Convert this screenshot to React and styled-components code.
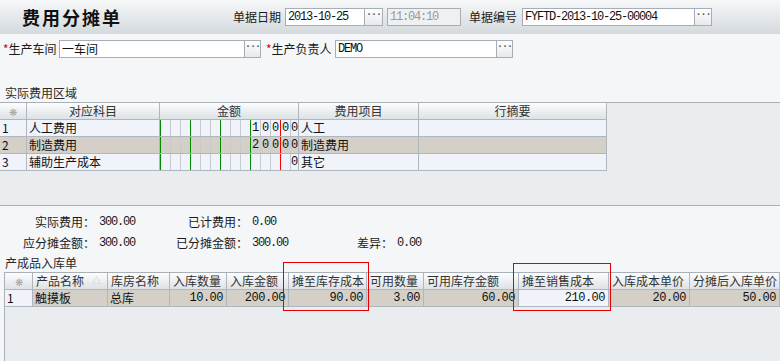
import React from 'react';
import styled, { createGlobalStyle } from 'styled-components';

const CJK = `"Noto Sans CJK SC", "Liberation Sans", sans-serif`;
const MONO = `"Liberation Mono", "DejaVu Sans Mono", monospace`;

const Global = createGlobalStyle`
  html, body { margin: 0; padding: 0; background: #f4f6f8; }
  body { width: 780px; height: 361px; overflow: hidden; font-family: ${CJK}; font-size: 12px; color: #1a1a1a; }
  * { box-sizing: border-box; }
`;

const Page = styled.div`
  position: relative;
  width: 780px;
  height: 361px;
  display: flex;
  flex-direction: column;
  background: #f4f6f8;
  overflow: hidden;
`;

const HeaderBar = styled.div`
  flex: none;
  height: 34px;
  display: flex;
  align-items: center;
  background: linear-gradient(#f7f8f9, #d3d9dd);
`;

const Title = styled.h1`
  margin: 0;
  flex: none;
  width: 233px;
  padding-left: 22px;
  font: bold 18px/20px ${CJK};
  letter-spacing: 2px;
  color: #111;
`;

const FieldRow = styled.div`
  flex: none;
  display: flex;
  align-items: center;
  height: 18px;
  margin-top: ${p => p.$mt || 0}px;
  padding-left: ${p => p.$pl || 0}px;
`;

const Label = styled.span`
  flex: none;
  width: ${p => p.$w}px;
  margin-left: ${p => p.$ml || 0}px;
  font-size: 12px;
  line-height: 16px;
  white-space: nowrap;
  color: #1a1a1a;
`;

const Star = styled.span`
  color: #e00000;
`;

const Input = styled.div`
  flex: none;
  width: ${p => p.$w}px;
  height: 18px;
  border: 1px solid #a6adb5;
  background: ${p => (p.$disabled ? '#eef0f2' : '#ffffff')};
  color: ${p => (p.$disabled ? '#9a9a9a' : '#111')};
  font-family: ${p => (p.$cjk ? CJK : MONO)};
  font-size: 12px;
  letter-spacing: ${p => (p.$cjk ? 0 : -1.2)}px;
  line-height: 16px;
  padding: 0 2px;
  white-space: nowrap;
  overflow: hidden;
`;

const DotButton = styled.div`
  flex: none;
  width: ${p => p.$w || 17}px;
  height: 18px;
  border: 1px solid #a6adb5;
  border-left: none;
  background: linear-gradient(#ffffff, #e6e9ec);
  color: #555;
  font: bold 10px/12px ${MONO};
  letter-spacing: -1px;
  text-align: center;
`;

const Gap = styled.span`
  flex: none;
  width: ${p => p.$w}px;
`;

const SectionLabel = styled.div`
  flex: none;
  height: 17px;
  margin-top: ${p => p.$mt}px;
  padding-left: 5px;
  font-size: 12px;
  line-height: 16px;
  color: #2a2a2a;
`;

const GridPanel = styled.div`
  flex: ${p => (p.$grow ? '1' : 'none')};
  height: ${p => (p.$h ? `${p.$h}px` : 'auto')};
  margin-left: ${p => p.$ml || 0}px;
  background: #eaedf0;
  border-top: 1px solid #a9b0b8;
  border-bottom: ${p => (p.$bottom ? '1px solid #a9b0b8' : 'none')};
  border-left: ${p => (p.$left ? '1px solid #a9b0b8' : 'none')};
`;

const GridRow = styled.div`
  display: grid;
  grid-template-columns: ${p => p.$cols};
  width: ${p => p.$width}px;
  height: 17px;
  border-bottom: 1px solid #b0b6bd;
`;

const HeadCell = styled.div`
  border-right: 1px solid #b0b6bd;
  background: linear-gradient(#fcfdfd, #dde2e6);
  color: #333;
  font-size: 12px;
  line-height: 16px;
  text-align: ${p => p.$align || 'center'};
  padding-left: ${p => (p.$align === 'left' ? 3 : 0)}px;
  white-space: nowrap;
  overflow: hidden;
  position: relative;
`;

const SortMark = styled.span`
  position: absolute;
  right: 6px;
  top: 0;
  font-size: 9px;
  color: #c4c8cc;
`;

const RowMark = styled.span`
  font-size: 10px;
  color: #a0a4a8;
`;

const Cell = styled.div`
  border-right: 1px solid #b0b6bd;
  background: ${p => (p.$sel ? '#d4d0c8' : '#f0f4fa')};
  color: #111;
  font-family: ${p => (p.$num ? MONO : CJK)};
  font-size: 12px;
  letter-spacing: ${p => (p.$num ? -0.5 : 0)}px;
  line-height: 16px;
  text-align: ${p => (p.$num ? 'right' : 'left')};
  padding: 0 ${p => (p.$num ? 3 : 0)}px 0 ${p => (p.$num ? 0 : 2)}px;
  white-space: nowrap;
  overflow: hidden;
`;

const AmountCell = styled.div`
  display: grid;
  grid-template-columns: repeat(13, 10px) 1fr;
  border-right: 1px solid #b0b6bd;
  background: ${p => (p.$sel ? '#d4d0c8' : '#f0f4fa')};
`;

const Digit = styled.div`
  border-left: 1px solid ${p => p.$line};
  font: 12px/16px ${MONO};
  text-align: center;
  color: #111;
`;

const Summary = styled.div`
  flex: none;
  padding-top: 5px;
  display: grid;
  grid-template-columns: 95px 60px 93px 52px 93px 1fr;
  grid-auto-rows: 21px;
  align-items: center;
`;

const SumLabel = styled.span`
  text-align: right;
  font-size: 12px;
  color: #1a1a1a;
  white-space: nowrap;
`;

const SumValue = styled.span`
  padding-left: 4px;
  font: 12px ${MONO};
  letter-spacing: -1.2px;
  color: #1a1a1a;
`;

const Highlight = styled.div`
  position: absolute;
  left: ${p => p.$x}px;
  top: ${p => p.$y}px;
  width: ${p => p.$w}px;
  height: ${p => p.$h}px;
  border: 1px solid #e30000;
  pointer-events: none;
`;

const lineColor = i => (i === 12 ? '#ff0000' : i % 3 === 0 && i < 12 ? '#008a00' : '#c6cacf');

const costCols = '27px 133px 139px 120px 188px';
const costRows = [
  { n: '1', subject: '人工费用', digits: { 9: '1', 10: '0', 11: '0', 12: '0', 13: '0' }, item: '人工' },
  { n: '2', subject: '制造费用', digits: { 9: '2', 10: '0', 11: '0', 12: '0', 13: '0' }, item: '制造费用', sel: true },
  { n: '3', subject: '辅助生产成本', digits: { 13: '0' }, item: '其它' },
];

const stockCols = '28px 75px 62px 57px 62px 78px 57px 95px 90px 81px 90px';
const stockHeads = ['产品名称', '库房名称', '入库数量', '入库金额', '摊至库存成本', '可用数量', '可用库存金额', '摊至销售成本', '入库成本单价', '分摊后入库单价'];
const stockRow = [
  { v: '触摸板' },
  { v: '总库' },
  { v: '10.00', num: true },
  { v: '200.00', num: true },
  { v: '90.00', num: true },
  { v: '3.00', num: true },
  { v: '60.00', num: true },
  { v: '210.00', num: true, edit: true },
  { v: '20.00', num: true },
  { v: '50.00', num: true },
];

export default function App() {
  return (
    <Page>
      <Global />
      <HeaderBar>
        <Title>费用分摊单</Title>
        <Label $w={52}>单据日期</Label>
        <Input $w={80}>2013-10-25</Input>
        <DotButton $w={18}>···</DotButton>
        <Gap $w={4} />
        <Input $w={74} $disabled>11:04:10</Input>
        <Label $w={53} $ml={8}>单据编号</Label>
        <Input $w={173}>FYFTD-2013-10-25-00004</Input>
        <DotButton $w={17}>···</DotButton>
      </HeaderBar>

      <FieldRow $mt={6} $pl={3}>
        <Label $w={56}><Star>*</Star>生产车间</Label>
        <Input $w={186} $cjk>一车间</Input>
        <DotButton $w={16}>···</DotButton>
        <Label $w={69} $ml={5}><Star>*</Star>生产负责人</Label>
        <Input $w={162}>DEMO</Input>
        <DotButton $w={16}>···</DotButton>
      </FieldRow>

      <SectionLabel $mt={27}>实际费用区域</SectionLabel>
      <GridPanel $h={104} $bottom>
        <GridRow $cols={costCols} $width={607}>
          <HeadCell><RowMark>❋</RowMark></HeadCell>
          <HeadCell>对应科目</HeadCell>
          <HeadCell>金额</HeadCell>
          <HeadCell>费用项目</HeadCell>
          <HeadCell>行摘要</HeadCell>
        </GridRow>
        {costRows.map(r => (
          <GridRow key={r.n} $cols={costCols} $width={607}>
            <Cell $sel={r.sel}>{r.n}</Cell>
            <Cell $sel={r.sel}>{r.subject}</Cell>
            <AmountCell $sel={r.sel}>
              {Array.from({ length: 14 }, (_, i) => (
                <Digit key={i} $line={lineColor(i)}>{r.digits[i] || ''}</Digit>
              ))}
            </AmountCell>
            <Cell $sel={r.sel}>{r.item}</Cell>
            <Cell $sel={r.sel} />
          </GridRow>
        ))}
      </GridPanel>

      <Summary>
        <SumLabel>实际费用：</SumLabel>
        <SumValue>300.00</SumValue>
        <SumLabel>已计费用：</SumLabel>
        <SumValue>0.00</SumValue>
        <span />
        <span />
        <SumLabel>应分摊金额：</SumLabel>
        <SumValue>300.00</SumValue>
        <SumLabel>已分摊金额：</SumLabel>
        <SumValue>300.00</SumValue>
        <SumLabel>差异：</SumLabel>
        <SumValue>0.00</SumValue>
      </Summary>

      <SectionLabel $mt={2}>产成品入库单</SectionLabel>
      <GridPanel $grow $ml={4} $left>
        <GridRow $cols={stockCols} $width={775}>
          <HeadCell><RowMark>❋</RowMark></HeadCell>
          {stockHeads.map((h, i) => (
            <HeadCell key={h} $align="left">
              {h}
              {i === 0 && <SortMark>△</SortMark>}
            </HeadCell>
          ))}
        </GridRow>
        <GridRow $cols={stockCols} $width={775}>
          <Cell>1</Cell>
          {stockRow.map((c, i) => (
            <Cell key={i} $num={c.num} $sel={!c.edit}>{c.v}</Cell>
          ))}
        </GridRow>
      </GridPanel>

      <Highlight $x={283} $y={262} $w={86} $h={49} />
      <Highlight $x={513} $y={263} $w={98} $h={48} />
    </Page>
  );
}
